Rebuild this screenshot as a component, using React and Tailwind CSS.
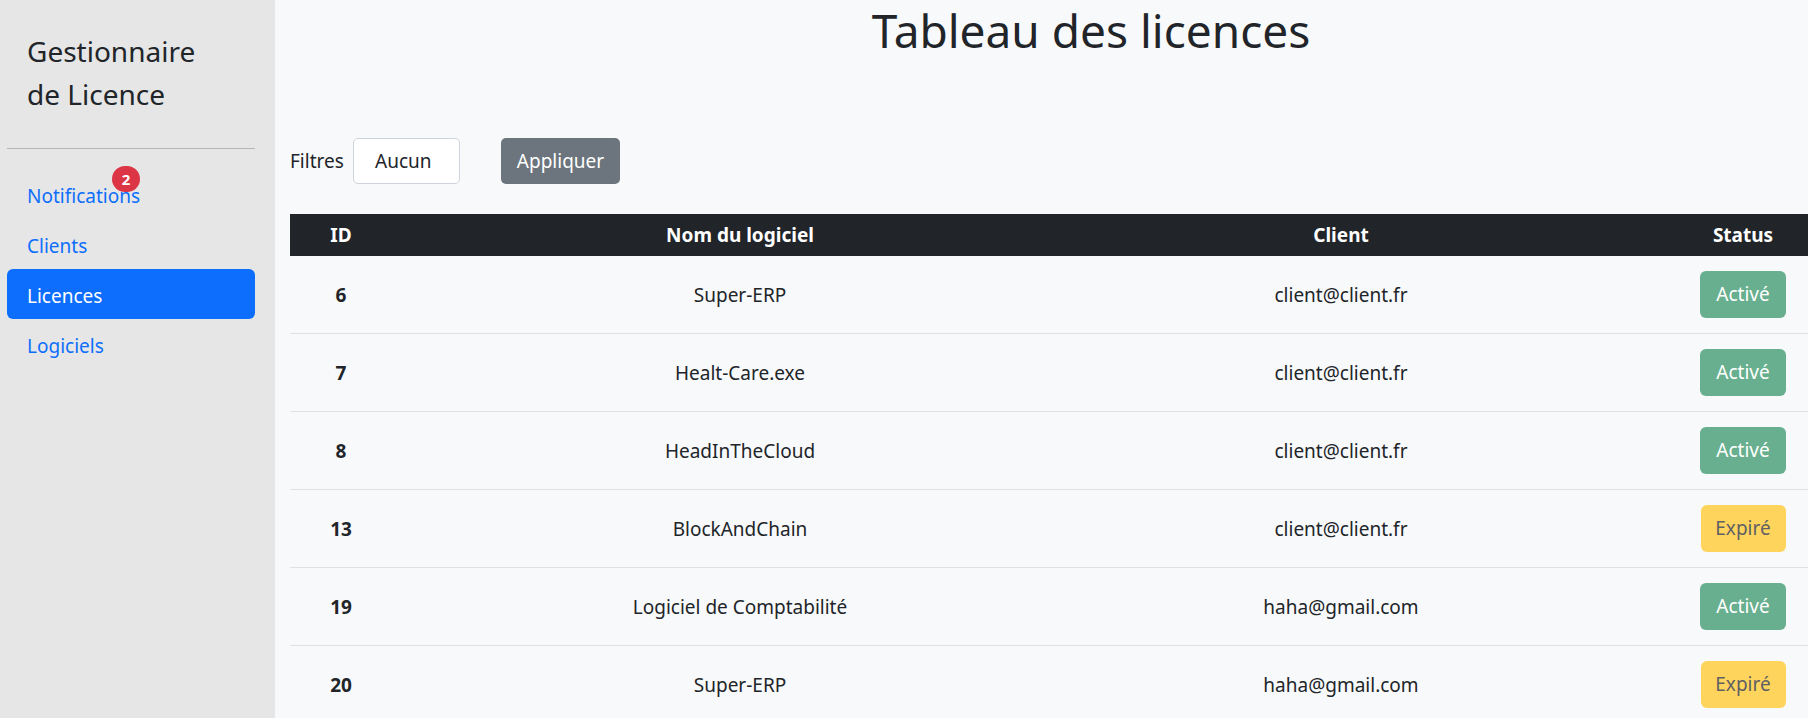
import React from 'react';

const licences = [
  { id: 6, name: 'Super-ERP', client: 'client@client.fr', status: 'active' },
  { id: 7, name: 'Healt-Care.exe', client: 'client@client.fr', status: 'active' },
  { id: 8, name: 'HeadInTheCloud', client: 'client@client.fr', status: 'active' },
  { id: 13, name: 'BlockAndChain', client: 'client@client.fr', status: 'expired' },
  { id: 19, name: 'Logiciel de Comptabilité', client: 'haha@gmail.com', status: 'active' },
  { id: 20, name: 'Super-ERP', client: 'haha@gmail.com', status: 'expired' },
];

const navItems = [
  { label: 'Notifications', badge: 2 },
  { label: 'Clients' },
  { label: 'Licences', active: true },
  { label: 'Logiciels' },
];

const Sidebar = () => {
  return (
    <aside className="w-[275px] shrink-0 bg-[#e6e6e6] px-[7px]">
      <h3 className="pl-[20px] pt-[30px] text-[28px] leading-[43px] text-[#212529] font-normal">
        Gestionnaire
        <br />
        de Licence
      </h3>
      <hr className="mt-[32px] w-[248px] border-t border-[#b5b5b5]" />
      <nav className="mt-[20px] flex flex-col">
        {navItems.map((item) => (
          <a
            key={item.label}
            href="#"
            className={`relative h-[50px] w-[248px] rounded-[6px] px-[20px] pt-[12px] pb-[8px] text-[19px] leading-[30px] ${
              item.active ? 'bg-[#0d6efd] text-white' : 'text-[#0d6efd]'
            }`}
          >
            {item.label}
            {item.badge && (
              <span className="absolute left-[105px] top-[-3px] flex h-[26px] w-[28px] items-center justify-center rounded-full bg-[#dc3545] text-[15px] font-bold text-white">
                {item.badge}
              </span>
            )}
          </a>
        ))}
      </nav>
    </aside>
  );
};

const StatusButton = ({ status }) => {
  if (status === 'active') {
    return (
      <span className="inline-flex h-[47px] w-[86px] items-center justify-center rounded-[6px] bg-[#67af8e] text-[19px] text-white">
        Activé
      </span>
    );
  }
  return (
    <span className="inline-flex h-[47px] w-[85px] items-center justify-center rounded-[6px] bg-[#ffd45c] text-[19px] text-[#5e6063]">
      Expiré
    </span>
  );
};

export default function App() {
  return (
    <div
      className="flex h-[718px] w-[1808px] overflow-hidden bg-[#f8f9fa] text-[#212529]"
      style={{ fontFamily: '"Noto Sans", "Open Sans", sans-serif' }}
    >
      <Sidebar />
      <main className="flex-1 overflow-hidden pl-[15px]">
        <div className="w-[1602px]">
          <h1 className="h-[60px] text-center text-[46px] leading-[60px] font-normal">
            Tableau des licences
          </h1>

          <div className="mt-[78px] flex items-center text-[19px]">
            <label className="w-[63px]">Filtres</label>
            <div className="flex h-[46px] w-[107px] items-center rounded-[5px] border border-[#ced4da] bg-white pl-[21px]">
              Aucun
            </div>
            <button className="ml-[41px] h-[46px] w-[119px] rounded-[5px] bg-[#6c757d] text-white">
              Appliquer
            </button>
          </div>

          <div className="mt-[30px] text-[19px]">
            <div className="grid h-[42px] grid-cols-[102px_696px_506px_298px] items-center bg-[#212529] font-bold text-white">
              <div className="text-center">ID</div>
              <div className="text-center">Nom du logiciel</div>
              <div className="text-center">Client</div>
              <div className="text-center">Status</div>
            </div>
            {licences.map((l) => (
              <div
                key={l.id}
                className="grid h-[78px] grid-cols-[102px_696px_506px_298px] items-center border-b border-[#dee2e6]"
              >
                <div className="pt-[2px] text-center font-bold">{l.id}</div>
                <div className="pt-[2px] text-center">{l.name}</div>
                <div className="pt-[2px] text-center">{l.client}</div>
                <div className="flex justify-center">
                  <StatusButton status={l.status} />
                </div>
              </div>
            ))}
          </div>
        </div>
      </main>
    </div>
  );
}
